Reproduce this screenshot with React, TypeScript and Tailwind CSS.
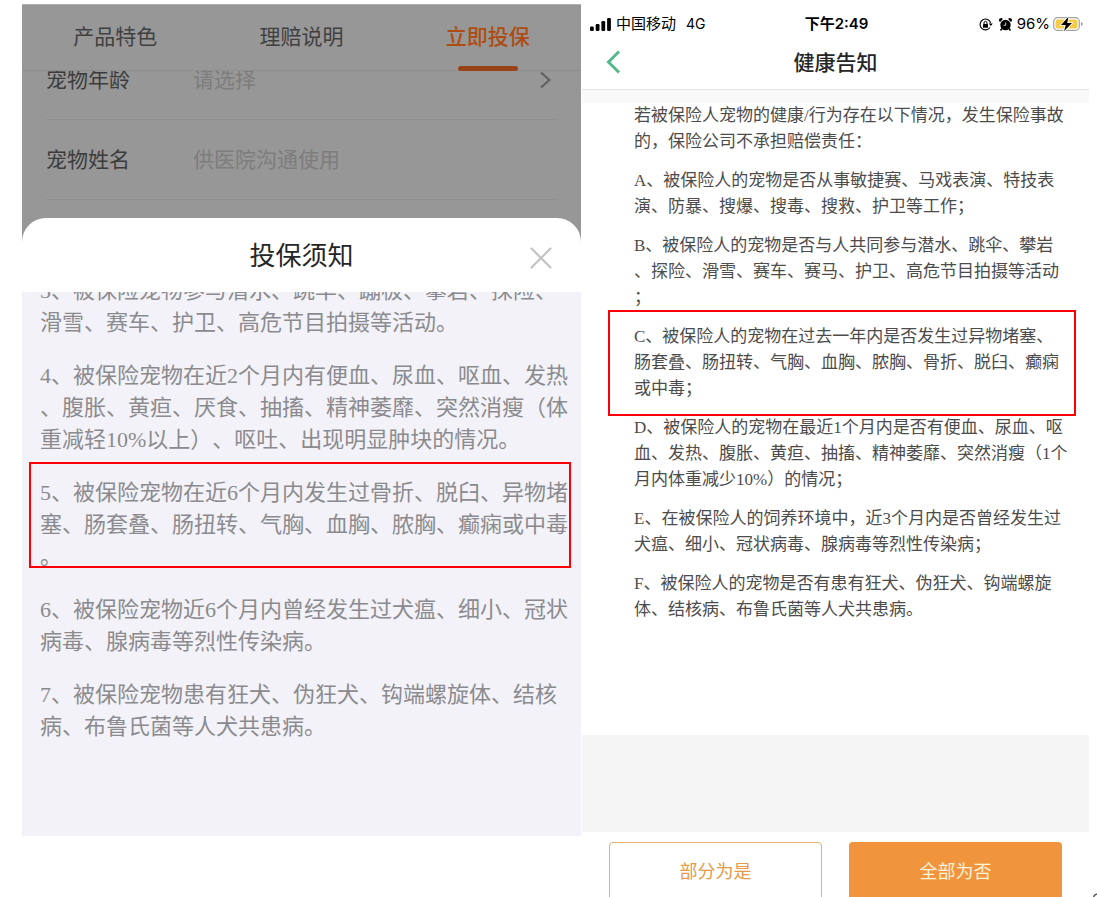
import { ReactNode } from "react";

const TABS = ["产品特色", "理赔说明", "立即投保"];

type Clause = { lines: string[]; marked?: boolean };

const NOTICE: Clause[] = [
  { lines: ["3、被保险宠物参与潜水、跳伞、蹦极、攀岩、探险、", "滑雪、赛车、护卫、高危节目拍摄等活动。"] },
  {
    lines: [
      "4、被保险宠物在近2个月内有便血、尿血、呕血、发热",
      "、腹胀、黄疸、厌食、抽搐、精神萎靡、突然消瘦（体",
      "重减轻10%以上）、呕吐、出现明显肿块的情况。",
    ],
  },
  {
    lines: ["5、被保险宠物在近6个月内发生过骨折、脱臼、异物堵", "塞、肠套叠、肠扭转、气胸、血胸、脓胸、癫痫或中毒", "。"],
    marked: true,
  },
  { lines: ["6、被保险宠物近6个月内曾经发生过犬瘟、细小、冠状", "病毒、腺病毒等烈性传染病。"] },
  { lines: ["7、被保险宠物患有狂犬、伪狂犬、钩端螺旋体、结核", "病、布鲁氏菌等人犬共患病。"] },
];

const HEALTH: Clause[] = [
  { lines: ["若被保险人宠物的健康/行为存在以下情况，发生保险事故", "的，保险公司不承担赔偿责任："] },
  { lines: ["A、被保险人的宠物是否从事敏捷赛、马戏表演、特技表", "演、防暴、搜爆、搜毒、搜救、护卫等工作；"] },
  { lines: ["B、被保险人的宠物是否与人共同参与潜水、跳伞、攀岩", "、探险、滑雪、赛车、赛马、护卫、高危节目拍摄等活动", "；"] },
  {
    lines: ["C、被保险人的宠物在过去一年内是否发生过异物堵塞、", "肠套叠、肠扭转、气胸、血胸、脓胸、骨折、脱臼、癫痫", "或中毒；"],
    marked: true,
  },
  { lines: ["D、被保险人的宠物在最近1个月内是否有便血、尿血、呕", "血、发热、腹胀、黄疸、抽搐、精神萎靡、突然消瘦（1个", "月内体重减少10%）的情况；"] },
  { lines: ["E、在被保险人的饲养环境中，近3个月内是否曾经发生过", "犬瘟、细小、冠状病毒、腺病毒等烈性传染病；"] },
  { lines: ["F、被保险人的宠物是否有患有狂犬、伪狂犬、钩端螺旋", "体、结核病、布鲁氏菌等人犬共患病。"] },
];

export default function App() {
  return (
    <main
      lang="zh-CN"
      className="relative grid h-screen grid-cols-[559fr_507fr] gap-px overflow-hidden bg-white pt-1 pr-2 pl-[22px] font-['Inter','Noto_Sans_CJK_SC',sans-serif] [text-spacing-trim:space-all]"
    >
      <InsurePanel />
      <HealthPanel />
      <svg className="absolute right-0 bottom-0 h-1 w-1" viewBox="0 0 4 4" fill="none" aria-hidden="true">
        <path d="M0.500 4C1 2.500 2 1.500 4 1" stroke="#555" strokeWidth="1.500" />
      </svg>
    </main>
  );
}

function InsurePanel() {
  return (
    <section className="h-[832px] overflow-hidden border-t border-[#b0b0b0] bg-[#979797]">
      <nav className="grid h-[66px] grid-cols-3 border-b border-[#8e8e8e] text-[21px]">
        {TABS.map((t, i) => (
          <button key={t} className={i === 2 ? "relative pb-[2px] font-medium text-[#ae4c12]" : "pb-[2px] text-[#404040]"}>
            {t}
            {i === 2 && <span className="absolute -bottom-px left-1/2 h-[5px] w-[60px] -translate-x-1/2 rounded-full bg-[#9b4318]" />}
          </button>
        ))}
      </nav>

      <div className="h-[147px] overflow-hidden px-6 text-[21px]">
        <div className="-mt-[31px]">
          <Row id="age" label="宠物年龄">
            <select id="age" className="flex-1 appearance-none bg-transparent text-[#7d7d7d] outline-none">
              <option>请选择</option>
            </select>
            <svg className="mr-[6px] h-[18px] w-3" viewBox="0 0 12 18" fill="none" aria-hidden="true">
              <path d="M2 1.500L10.500 9L2 16.500" stroke="#5e5e5e" strokeWidth="2" />
            </svg>
          </Row>
          <Row id="name" label="宠物姓名">
            <input id="name" className="min-w-0 flex-1 bg-transparent outline-none placeholder:text-[#7d7d7d]" placeholder="供医院沟通使用" />
          </Row>
        </div>
      </div>

      <div className="h-full rounded-t-[24px] bg-white">
        <header className="relative flex h-[74px] items-center justify-center">
          <h2 className="text-[26px] text-[#262626]">投保须知</h2>
          <button aria-label="关闭" className="absolute top-[29px] right-[29px]">
            <svg className="h-[22px] w-[22px]" viewBox="0 0 22 22" fill="none">
              <path d="M1.500 1.500L20.500 20.500M20.500 1.500L1.500 20.500" stroke="#c4c4c4" strokeWidth="2.200" strokeLinecap="round" />
            </svg>
          </button>
        </header>
        <div className="h-full overflow-hidden bg-[#f3f2f8] pr-5 pl-[18px]">
          <div className="-mt-[17px] flex flex-col gap-[21px] font-['Liberation_Serif','Noto_Sans_CJK_SC',sans-serif] text-[22px] leading-8 text-[#8b8b8f]">
            {NOTICE.map((c) => (
              <Lines key={c.lines[0]} lines={c.lines}>
                {c.marked && <span className="absolute -top-[15px] -right-[10px] bottom-[5px] -left-[11px] border-2 border-[#fb0007]" />}
              </Lines>
            ))}
          </div>
        </div>
      </div>
    </section>
  );
}

function HealthPanel() {
  return (
    <section className="min-w-0">
      <div className="grid h-10 grid-cols-[1fr_auto_1fr] items-center pr-[6px] pl-2 text-[15px] text-black">
        <div className="flex items-center">
          <svg className="mr-[5px] h-[13px] w-[21px]" viewBox="0 0 21 13" aria-hidden="true">
            <rect x="0" y="8.500" width="3.800" height="4.500" rx="1.200" />
            <rect x="5.700" y="6" width="3.800" height="7" rx="1.200" />
            <rect x="11.400" y="3" width="3.800" height="10" rx="1.200" />
            <rect x="17.100" y="0" width="3.800" height="13" rx="1.200" />
          </svg>
          <span>中国移动</span>
          <span className="ml-[10px] text-sm">4G</span>
        </div>
        <span className="font-semibold">下午2:49</span>
        <div className="flex items-center justify-end">
          <LockIcon />
          <AlarmIcon />
          <span className="mr-[3px]">96%</span>
          <BatteryIcon />
        </div>
      </div>

      <header className="relative flex h-[46px] items-center justify-center border-b border-[#e4e4e4]">
        <button aria-label="返回" className="absolute top-[6px] left-6">
          <svg className="h-6 w-[15px]" viewBox="0 0 15 24" fill="none">
            <path d="M13 1.500L2.500 12L13 22.500" stroke="#55b98c" strokeWidth="3" />
          </svg>
        </button>
        <h1 className="pb-2 text-[21px] font-medium text-[#262626]">健康告知</h1>
      </header>
      <div className="h-[13px] bg-[#f9f9f9]" />

      <div className="flex h-[632px] flex-col gap-[13px] pr-4 pl-[52px] font-['Liberation_Serif','Noto_Sans_CJK_SC',sans-serif] text-[17px] leading-[26px] text-[#4c4c4c]">
        {HEALTH.map((c) => (
          <Lines key={c.lines[0]} lines={c.lines}>
            {c.marked && <span className="absolute -top-[14px] -right-[3px] -bottom-[14px] -left-[26px] border-2 border-[#fb0007]" />}
          </Lines>
        ))}
      </div>

      <div className="h-[97px] bg-[#f5f5f5]" />
      <div className="grid grid-cols-2 gap-[27px] px-[27px] pt-[10px] text-lg">
        <button className="h-[60px] rounded border border-[#dfb271] text-[#e59a4c]">部分为是</button>
        <button className="h-[60px] rounded bg-[#f0953d] text-[#fff3d8]">全部为否</button>
      </div>
    </section>
  );
}

function Lines({ lines, children }: { lines: string[]; children?: ReactNode }) {
  return (
    <p className="relative whitespace-nowrap">
      {lines.map((l) => <span key={l} className="block">{l}</span>)}
      {children}
    </p>
  );
}

function Row({ id, label, children }: { id: string; label: string; children: ReactNode }) {
  return (
    <div className="flex h-20 items-center border-b border-[#909090]">
      <label htmlFor={id} className="w-[147px] text-[#3c3c3c]">{label}</label>
      {children}
    </div>
  );
}

function LockIcon() {
  return (
    <svg className="mr-[6px] h-[13px] w-[14px]" viewBox="0 0 14 13" fill="none" stroke="#000" aria-hidden="true">
      <path d="M11.700 5A5.400 5.400 0 1 0 11 9.500" strokeWidth="1.100" />
      <path d="M9.800 5.500H13.800L11.800 8Z" fill="#000" stroke="none" />
      <rect x="4" y="6" width="5" height="3.800" rx=".6" fill="#000" stroke="none" />
      <path d="M5 6.200V4.900A1.500 1.500 0 0 1 8 4.900V6.200" />
    </svg>
  );
}

function AlarmIcon() {
  return (
    <svg className="mr-[5px] h-[13px] w-[13px]" viewBox="0 0 13 13" fill="#000" aria-hidden="true">
      <circle cx="6.500" cy="7" r="5.200" />
      <path d="M.5 3.500A2 2 0 0 1 3.800 1L1.200 4Z" />
      <path d="M12.500 3.500A2 2 0 0 0 9.200 1L11.800 4Z" />
      <path d="M3 10.500L1.500 12.500M10 10.500L11.500 12.500" stroke="#000" strokeWidth="1.500" />
      <path d="M6.700 4.500V7.300H4.500" fill="none" stroke="#fff" strokeWidth=".8" />
    </svg>
  );
}

function BatteryIcon() {
  return (
    <svg className="h-4 w-[30px]" viewBox="0 0 30 16" fill="none" aria-hidden="true">
      <rect x=".7" y="1.700" width="25.600" height="12.600" rx="3.800" stroke="#a3a3a3" strokeWidth="1.200" />
      <rect x="2.500" y="3.500" width="22" height="9" rx="2.200" fill="#f6cb46" />
      <path d="M28 6V10C29.200 9.600 29.800 9 29.800 8C29.800 7 29.200 6.400 28 6Z" fill="#a3a3a3" />
      <path d="M15.500 .8L8 9H12.800L11 15.200L19 7H14.200Z" fill="#000" stroke="#fff" strokeWidth="1.600" paintOrder="stroke" />
    </svg>
  );
}
